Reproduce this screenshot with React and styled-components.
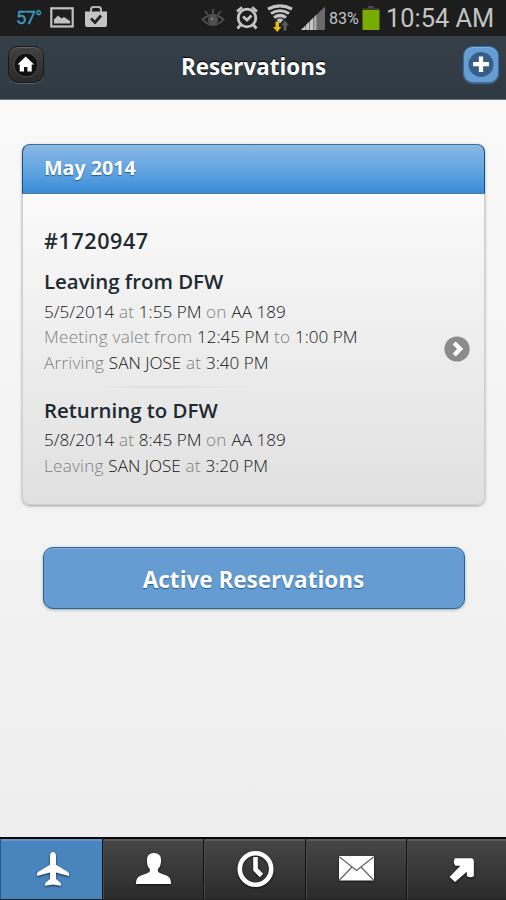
import styled, { createGlobalStyle } from "styled-components";

const GlobalStyle = createGlobalStyle`
  * {
    box-sizing: border-box;
  }
  body {
    margin: 0;
    font-family: "Open Sans", "Noto Sans", sans-serif;
  }
  p, h1, h2, h3 {
    margin: 0;
  }
  svg {
    display: block;
    flex: none;
  }
`;

const trips = [
  {
    title: "Leaving from DFW",
    lines: [
      [["5/5/2014", 1], [" at "], ["1:55 PM", 1], [" on "], ["AA 189", 1]],
      [["Meeting valet from "], ["12:45 PM", 1], [" to "], ["1:00 PM", 1]],
      [["Arriving "], ["SAN JOSE", 1], [" at "], ["3:40 PM", 1]],
    ],
  },
  {
    title: "Returning to DFW",
    lines: [
      [["5/8/2014", 1], [" at "], ["8:45 PM", 1], [" on "], ["AA 189", 1]],
      [["Leaving "], ["SAN JOSE", 1], [" at "], ["3:20 PM", 1]],
    ],
  },
];

function StatusIcons() {
  return (
    <>
      <Temperature>57°</Temperature>
      <StatusIcon $left={9} width="24" height="22" viewBox="0 0 24 22">
        <rect x="1.3" y="1.3" width="21.4" height="18.2" fill="none" stroke="#c0c0c0" strokeWidth="2.2" />
        <path d="M4 16.5v-4l4-4 3.5 3 2.5-1.5 6 4v2.5z" fill="#c0c0c0" />
      </StatusIcon>
      <StatusIcon $left={10} width="24" height="26" viewBox="0 0 24 26">
        <path d="M1 6.5h22V20q0 2-2 2H3q-2 0-2-2z" fill="#c4c4c4" />
        <path d="M7 7V4.5Q7 2 9.5 2h5Q17 2 17 4.5V7" fill="none" stroke="#b5b5b5" strokeWidth="2" />
        <path d="M7 13.5l4 4 6-7" fill="none" stroke="#222" strokeWidth="2.8" />
      </StatusIcon>
      <StatusIcon $left={93} width="24" height="22" viewBox="0 0 24 22" fill="none" stroke="#505050" strokeWidth="1.8">
        <path d="M1.5 12.5q5-4.5 10.5-4.500t10.5 4.500q-5 5.500-10.500 5.500T1.500 12.500zM4 4l3 3.500M12 2v5M20 4l-3 3.500" />
        <circle cx="12" cy="13" r="4.2" fill="#505050" />
        <circle cx="11" cy="12" r="1" fill="#999" stroke="none" />
      </StatusIcon>
      <StatusIcon $left={10} width="24" height="26" viewBox="0 0 24 26" fill="none" stroke="#c4c4c4" strokeWidth="2.8">
        <circle cx="12" cy="13" r="8.8" />
        <path d="M8 11.5l4 3.5 4.500-4.500M2 6.500L7 2.300M22 6.500L17 2.300M5.500 20l-3 3.500M18.500 20l3 3.500" />
      </StatusIcon>
      <StatusIcon $left={8} width="26" height="28" viewBox="0 0 26 28" fill="none" strokeWidth="3.2">
        <g stroke="#c4c4c4">
          <path d="M1 5.2q12-6.500 24 0M4 9.500q9-5.500 18 0M7 13.500q6-4 12 0" />
          <path d="M9.500 15.800q3.500-2.500 7 0L13 19.500z" fill="#c4c4c4" stroke="none" />
        </g>
        <path d="M8.500 17.500h3.500v5.500h2.500l-4.200 5-4.300-5h2.500z" fill="#e4bd13" />
        <path d="M16.500 26.500v-5H14l4-5 4 5h-2.500v5z" fill="#5c5c5c" />
      </StatusIcon>
      <StatusIcon $left={7} width="26" height="25" viewBox="0 0 26 25">
        <path d="M1 24L25 0.500V24z" fill="#6a6a6a" />
        <path d="M1 24l4.500-4.500V24zM6.200 24v-5.300l3-3V24zM10 24v-9l3.200-3.200V24z" fill="#c8c8c8" />
        <path d="M14 24V11l2.500-2.500V24z" fill="#aaa" />
      </StatusIcon>
      <Percent>83%</Percent>
      <StatusIcon $left={2} width="18" height="24" viewBox="0 1.500 18 24">
        <path d="M6 1.500h6v2H6z" fill="#484848" />
        <path d="M0.500 3.500h17v2.500H0.500z" fill="#393f2b" />
        <path d="M0.500 5.500h17v20H0.500z" fill="#78ac00" />
      </StatusIcon>
      <Clock>10:54 AM</Clock>
    </>
  );
}

function PlaneIcon() {
  return (
    <TabIcon width="36" height="38" viewBox="0 0 36 38">
      <path d="M18 2q3 0 3 4.500v8.300L33 22q1.500 1 1 4l-13-3.500v6.500l4.400 3.800q1 1 .6 3L18 34.500l-8 1.300q-.4-2 .6-3l4.400-3.800v-6.500L2 26q-.5-3 1-4l12-7.200V6.500Q15 2 18 2z" fill="#fff" />
    </TabIcon>
  );
}

function PersonIcon() {
  return (
    <TabIcon width="38" height="36" viewBox="0 0 38 36">
      <path d="M19 2c5.500 0 7.500 4 7 8.500-.3 4-1.500 6-3 7.500-.8 3 1 4 5 5.200 5.500 1.700 8 3.300 8 9.800H1c0-6.500 3-8.100 8.500-9.800 4-1.200 6-2.200 5.200-5.200-1.500-1.500-2.500-3.500-2.700-7.500C11.600 6 13.500 2 19 2z" fill="#fff" />
    </TabIcon>
  );
}

function ClockIcon() {
  return (
    <TabIcon width="38" height="38" viewBox="0 0 38 38" fill="none" stroke="#fff">
      <circle cx="19.500" cy="19" r="15.700" strokeWidth="4.600" />
      <path d="M19.500 7v12.500l6 6" strokeWidth="4.600" />
    </TabIcon>
  );
}

function MailIcon() {
  return (
    <TabIcon width="38" height="28" viewBox="0 0 38 28">
      <rect x="1" y="1" width="35" height="24.500" rx="1" fill="#fff" />
      <path d="M1.500 2l17 13.500L35.500 2M1.500 25l12.500-13M35.500 25L23 12" fill="none" stroke="#666" strokeWidth="1.300" />
    </TabIcon>
  );
}

function ArrowIcon() {
  return (
    <TabIcon width="28" height="27" viewBox="0 0 26 25">
      <path d="M6.500 2h14.500q3 0 3 3v13.500q-3 2.500-6.500 0v-4L6.500 24l-5-4.500L11.500 9H7Q4 5.500 6.500 2z" fill="#fff" />
    </TabIcon>
  );
}

const tabs = [PlaneIcon, PersonIcon, ClockIcon, MailIcon, ArrowIcon];

function Trip({ title, lines }) {
  return (
    <section>
      <TripTitle>{title}</TripTitle>
      {lines.map((line, i) => (
        <TripLine key={i}>
          {line.map(([text, strong], j) =>
            strong ? <Value key={j}>{text}</Value> : text
          )}
        </TripLine>
      ))}
    </section>
  );
}

function App() {
  return (
    <Page>
      <GlobalStyle />
      <StatusBar>
        <StatusIcons />
      </StatusBar>
      <Header>
        <HeaderButton aria-label="Home">
          <svg width="26" height="26" viewBox="0 0 26 26">
            <circle cx="13" cy="13" r="12" fill="#101112" stroke="#4d4d4d" />
            <path d="M12.700 4.500l8.300 8h-2.300V19.500h-4.300V15h-3.400v4.500H6.700v-7H4.500z" fill="#fff" />
          </svg>
        </HeaderButton>
        <Title>Reservations</Title>
        <HeaderButton $blue aria-label="Add">
          <svg width="26" height="26" viewBox="0 0 26 26">
            <circle cx="13" cy="12.500" r="12.500" fill="#365f87" />
            <path d="M13 4.500v15.500M5 12.200h16" stroke="#fff" strokeWidth="4.300" />
          </svg>
        </HeaderButton>
      </Header>
      <Content>
        <Card>
          <CardHeader>May 2014</CardHeader>
          <CardBody>
            <Details>
              <Number>#1720947</Number>
              <Trip {...trips[0]} />
              <Divider />
              <Trip {...trips[1]} />
            </Details>
            <svg width="26" height="28" viewBox="0 0 26 28">
              <circle cx="13" cy="13" r="12.600" fill="#8b8b8b" />
              <path d="M10.200 7l6 6-6 6" fill="none" stroke="#fff" strokeWidth="4.400" />
            </svg>
          </CardBody>
        </Card>
        <ActiveButton>Active Reservations</ActiveButton>
      </Content>
      <TabBar>
        {tabs.map((Icon, i) => (
          <Tab key={i} $active={i === 0}>
            <Icon />
          </Tab>
        ))}
      </TabBar>
    </Page>
  );
}

const Page = styled.div`
  display: flex;
  flex-direction: column;
  width: 506px;
  height: 900px;
  overflow: hidden;
  background: linear-gradient(#f9f9f9 100px, #eeeeee 837px);
`;

const StatusBar = styled.div`
  display: flex;
  align-items: center;
  height: 36px;
  padding-left: 16px;
  background: #1d1d1d;
  color: #c4c4c4;
  font-family: Roboto, sans-serif;
  white-space: nowrap;
`;

const StatusIcon = styled.svg`
  margin-left: ${(p) => p.$left}px;
`;

const Temperature = styled.span`
  width: 25px;
  font-size: 18.5px;
  letter-spacing: -0.8px;
  color: #3b9cc2;
  -webkit-text-stroke: 0.3px #3b9cc2;
`;

const Percent = styled.span`
  width: 31px;
  margin-left: 3px;
  font-size: 16px;
`;

const Clock = styled.span`
  margin-left: 6px;
  font-size: 25.4px;
  line-height: 36px;
  padding-bottom: 1px;
`;

const Header = styled.header`
  display: flex;
  align-items: flex-start;
  justify-content: space-between;
  height: 64px;
  padding: 10px 7px 0 8px;
  background: linear-gradient(#343f47, #303a43);
  border-bottom: 1px solid #6c747a;
`;

const HeaderButton = styled.button`
  display: flex;
  align-items: center;
  justify-content: center;
  width: 36px;
  height: 37px;
  padding: 0;
  border: 1px solid ${(p) => (p.$blue ? "#2e6fa3" : "#17191a")};
  border-radius: 10px;
  background: ${(p) => (p.$blue ? "#659dd4" : "linear-gradient(#414141, #292929)")};
  box-shadow: ${(p) =>
    p.$blue
      ? "inset 0 1px 0 #82b3e2, 0 1px 1px #55677a"
      : "inset 0 1px 0 #626262, 0 1px 0 #59636a"};
`;

const Title = styled.h1`
  font-size: 22.4px;
  line-height: 42px;
  font-weight: 700;
  color: #fff;
  text-shadow: 0 -1px 1px #000;
`;

const Content = styled.main`
  display: flex;
  flex: 1;
  flex-direction: column;
  align-items: center;
  padding: 44px 0 0 1px;
`;

const Card = styled.section`
  width: 463px;
  height: 361px;
  border-radius: 8px;
  background: linear-gradient(#fafafa 50px, #e0e0e0);
  box-shadow: inset 0 0 0 1px #cfcfcf, 0 1px 3px rgba(0, 0, 0, 0.35);
`;

const CardHeader = styled.h2`
  height: 50px;
  padding: 0 21px;
  border: 1px solid #15507f;
  border-top-color: #386d9b;
  border-bottom-color: #597b9d;
  border-radius: 8px 8px 0 0;
  background: linear-gradient(#8bb8e6, #5ca2e0 60%, #388bd6);
  box-shadow: inset 0 1px 0 #94bce3;
  color: #fff;
  font-size: 19.7px;
  line-height: 45px;
  font-weight: 700;
  text-shadow: 0 1px 1px #245b8f;
`;

const CardBody = styled.div`
  display: flex;
  align-items: center;
  justify-content: space-between;
  height: 311px;
  padding: 0 15px 0 22px;
`;

const Details = styled.div`
  width: 350px;
  height: 100%;
  padding-top: 29px;
`;

const Number = styled.h2`
  font-size: 21.5px;
  line-height: 36px;
  font-weight: 600;
  letter-spacing: 0.6px;
  color: #202a30;
`;

const TripTitle = styled.h3`
  padding: 7px 0 2px;
  font-size: 20.4px;
  line-height: 31px;
  font-weight: 600;
  color: #202a30;
`;

const TripLine = styled.p`
  font-size: 17.1px;
  line-height: 25.4px;
  letter-spacing: 0.25px;
  color: #808080;
  font-weight: 300;
  white-space: nowrap;
`;

const Value = styled.span`
  letter-spacing: 0;
  color: #141414;
`;

const Divider = styled.div`
  width: 214px;
  height: 2px;
  margin: 11px 0 0;
  background: linear-gradient(90deg, transparent 25%, #dedede 50%, transparent);

  & + section h3 {
    padding-bottom: 1px;
  }
`;

const ActiveButton = styled.button`
  width: 422px;
  height: 62px;
  margin-top: 42px;
  padding-top: 4px;
  border: 1px solid #20689c;
  border-radius: 10px;
  background: #659cd1;
  box-shadow: inset 0 1px 0 #83b2df, 0 1px 3px rgba(0, 0, 0, 0.3);
  color: #fff;
  font: 700 22.5px "Open Sans", sans-serif;
  text-shadow: 0 1px 1px #245b8f;
`;

const TabBar = styled.nav`
  display: grid;
  grid-template-columns: 103px 101px 102px 101px 99px;
  height: 63px;
  border-top: 2px solid #080808;
  border-bottom: 1px solid #242424;
`;

const Tab = styled.div`
  display: flex;
  align-items: center;
  justify-content: center;
  padding-left: ${(p) => (p.$active ? 3 : 0)}px;
  border-right: 1px solid #141414;
  border-left: 1px solid ${(p) => (p.$active ? "#225b8b" : "#474747")};
  background: ${(p) => (p.$active ? "#4984bd" : "linear-gradient(#464646, #2b2b2b)")};
  box-shadow: inset 0 2px 0 ${(p) => (p.$active ? "#6596c4" : "#5b5b5b")};
  &:last-child {
    padding-left: 9px;
    border-right: none;
  }
`;

const TabIcon = styled.svg`
  filter: drop-shadow(0 1px 1px rgba(0, 0, 0, 0.65));
`;

export default App;
